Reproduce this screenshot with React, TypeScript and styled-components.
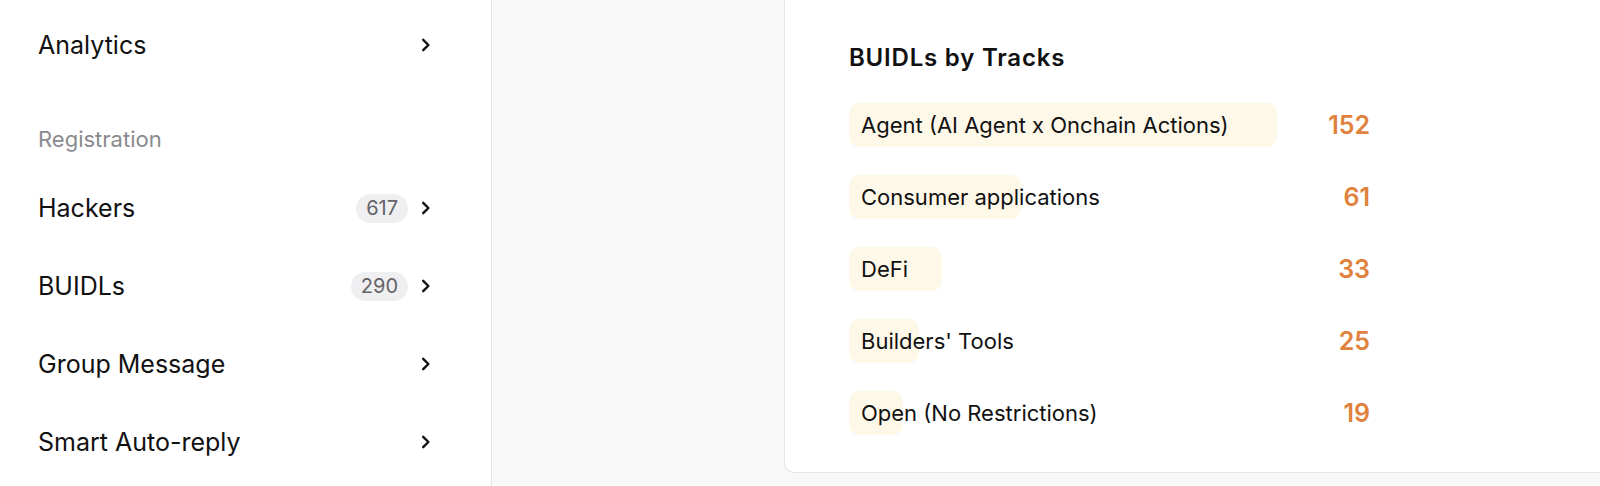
import styled, { createGlobalStyle } from "styled-components";

const tracks = [
  { name: "Agent (AI Agent x Onchain Actions)", count: 152 },
  { name: "Consumer applications", count: 61 },
  { name: "DeFi", count: 33 },
  { name: "Builders' Tools", count: 25 },
  { name: "Open (No Restrictions)", count: 19 },
];

const navItems = [
  { label: "Hackers", badge: 617 },
  { label: "BUIDLs", badge: 290 },
  { label: "Group Message" },
  { label: "Smart Auto-reply" },
];

const BAR_MAX = 428;

function Chevron() {
  return (
    <ChevronIcon viewBox="0 0 10 14" width="10" height="14">
      <path
        d="M2.2 1.8 L7.4 7 L2.2 12.2"
        fill="none"
        stroke="#111"
        strokeWidth="2.4"
        strokeLinecap="round"
        strokeLinejoin="round"
      />
    </ChevronIcon>
  );
}

export default function App() {
  const max = Math.max(...tracks.map((t) => t.count));
  return (
    <>
      <GlobalStyle />
      <Layout>
        <Sidebar>
          <NavItem>
            <NavLabel>Analytics</NavLabel>
            <Chevron />
          </NavItem>
          <SectionLabel>Registration</SectionLabel>
          {navItems.map((item) => (
            <NavItem key={item.label}>
              <NavLabel>{item.label}</NavLabel>
              {item.badge !== undefined && <Badge>{item.badge}</Badge>}
              <Chevron />
            </NavItem>
          ))}
        </Sidebar>
        <Main>
          <Card>
            <CardTitle>BUIDLs by Tracks</CardTitle>
            <TrackList>
              {tracks.map((t) => (
                <TrackRow key={t.name}>
                  <TrackBarCell>
                    <TrackBar style={{ width: (t.count / max) * BAR_MAX }} />
                    <TrackName>{t.name}</TrackName>
                  </TrackBarCell>
                  <TrackCount>{t.count}</TrackCount>
                </TrackRow>
              ))}
            </TrackList>
          </Card>
        </Main>
      </Layout>
    </>
  );
}

const GlobalStyle = createGlobalStyle`
  html, body {
    margin: 0;
    padding: 0;
    background: #ffffff;
  }
  body {
    font-family: Inter, "Noto Sans", sans-serif;
    color: #111111;
    -webkit-font-smoothing: antialiased;
  }
`;

const Layout = styled.div`
  display: flex;
  width: 100vw;
  height: 100vh;
  overflow: hidden;
`;

const Sidebar = styled.aside`
  flex: none;
  width: 492px;
  box-sizing: border-box;
  padding: 6px 60px 0 38px;
  background: #ffffff;
  border-right: 1px solid #e6e6e8;
  display: flex;
  flex-direction: column;
`;

const NavItem = styled.div`
  display: flex;
  align-items: center;
  height: 78px;
`;

const NavLabel = styled.span`
  flex: 1;
  font-size: 25px;
  line-height: 1.21;
  color: #111111;
`;

const SectionLabel = styled.div`
  margin: 40px 0 15px;
  font-size: 22px;
  line-height: 30px;
  color: #8a8a8e;
`;

const Badge = styled.span`
  display: inline-flex;
  align-items: center;
  justify-content: center;
  height: 29px;
  padding: 0 10px;
  margin-right: 13px;
  border-radius: 15px;
  background: #efeff1;
  color: #636368;
  font-size: 20px;
`;

const ChevronIcon = styled.svg`
  flex: none;
  display: block;
`;

const Main = styled.main`
  flex: 1;
  background: #f8f8f9;
  padding-left: 292px;
  overflow: hidden;
`;

const Card = styled.section`
  width: 1000px;
  height: 473px;
  box-sizing: border-box;
  padding: 44px 0 0 64px;
  background: #ffffff;
  border: 1px solid #e6e6e8;
  border-top: none;
  border-radius: 0 0 0 10px;
`;

const CardTitle = styled.h2`
  margin: 0 0 31px;
  font-size: 24px;
  line-height: 28px;
  font-weight: 600;
  letter-spacing: 0.8px;
  color: #111111;
`;

const TrackList = styled.div`
  display: flex;
  flex-direction: column;
  gap: 28px;
`;

const TrackRow = styled.div`
  display: grid;
  grid-template-columns: ${BAR_MAX}px 93px;
  align-items: center;
  height: 44px;
`;

const TrackBarCell = styled.div`
  position: relative;
  height: 44px;
  display: flex;
  align-items: center;
`;

const TrackBar = styled.div`
  position: absolute;
  left: 0;
  top: 0;
  bottom: 0;
  border-radius: 10px;
  background: #fef8e9;
`;

const TrackName = styled.span`
  position: relative;
  padding-left: 12px;
  font-size: 22px;
  white-space: nowrap;
  color: #111111;
`;

const TrackCount = styled.span`
  text-align: right;
  font-size: 25px;
  font-weight: 600;
  color: #e0823d;
`;
